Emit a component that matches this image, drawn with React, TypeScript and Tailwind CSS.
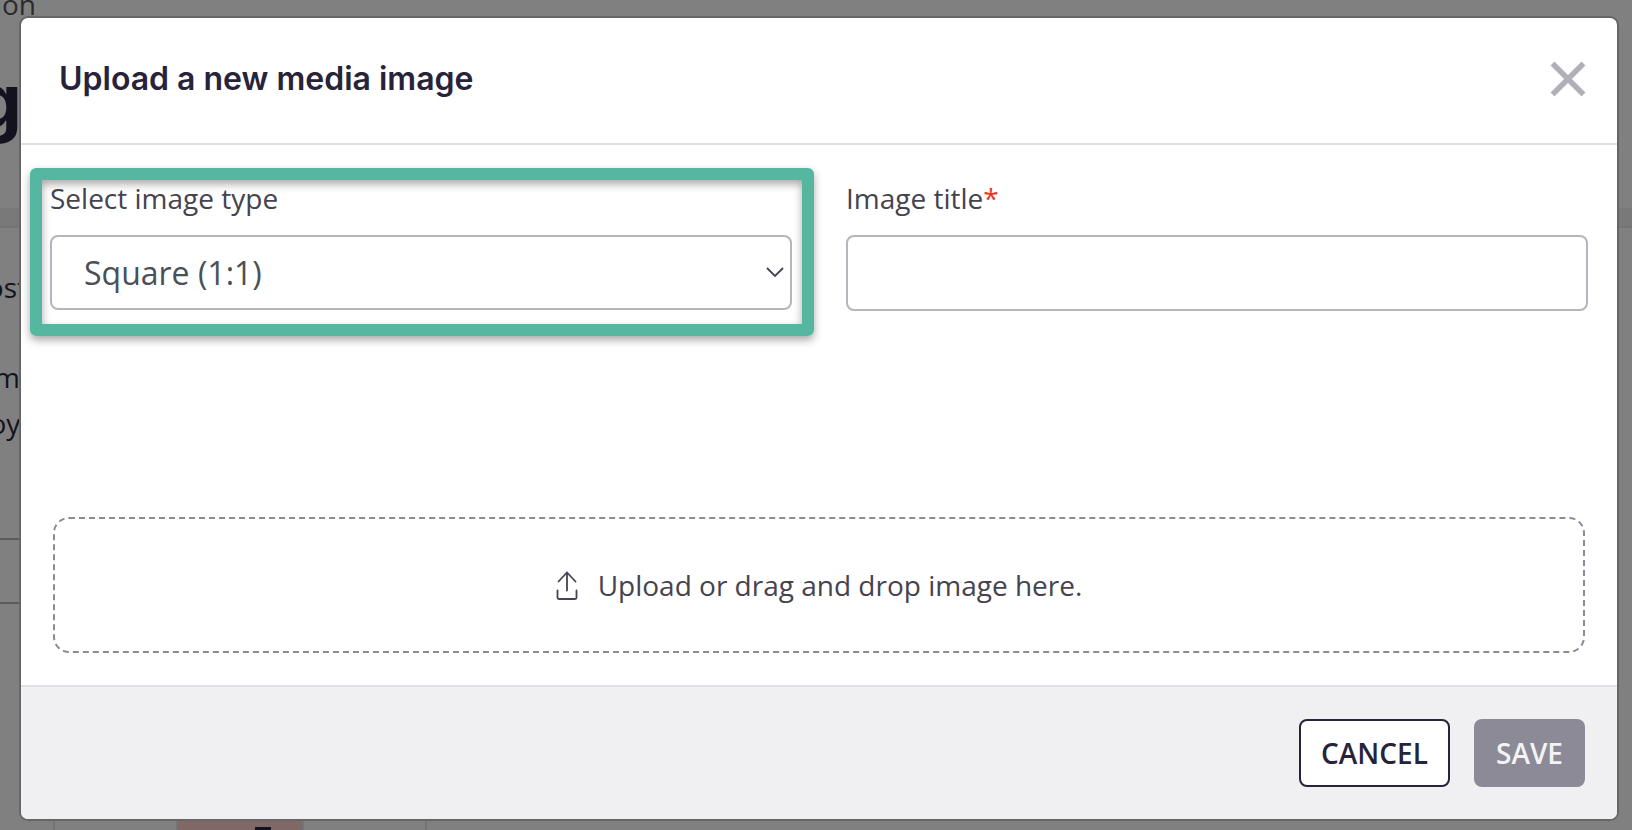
import { useState } from 'react';

const IMAGE_TYPES = ['Square (1:1)', 'Landscape (16:9)', 'Portrait (3:4)'];

const PageBackdrop = () => (
  <div
    aria-hidden="true"
    className="absolute inset-0 overflow-hidden bg-[#808080] text-[28px] text-[#15121f] flex flex-col"
  >
    <div className="h-[208px] shrink-0">
      <div className="h-6 w-9 flex justify-end items-end text-[#2b2b30] leading-10">
        <span>ion</span>
      </div>
      <div className="mt-6 w-[22px] flex justify-end text-[76px] leading-[104px] font-bold font-['Inter',sans-serif]">
        <span>g</span>
      </div>
    </div>
    <div className="h-5 shrink-0 bg-[#797979] border-b-2 border-[#757575]"></div>
    <div className="h-[310px] shrink-0 pt-9">
      <div className="w-[27px] flex justify-end leading-[46px]">
        <span>ost</span>
      </div>
      <div className="mt-11 w-5 flex justify-end leading-[46px]">
        <span>m</span>
      </div>
      <div className="w-9 flex justify-end leading-[46px]">
        <span>oye</span>
      </div>
    </div>
    <div className="h-[66px] w-1/2 shrink-0 border-y-2 border-[#5c5c5c]"></div>
    <div className="flex-1 flex pl-[53px]">
      <div className="w-[123px] border-l-2 border-[#747474]"></div>
      <div className="w-[128px] border-x-2 border-[#747476] bg-[#806866] flex flex-col justify-end items-end pr-[31px]">
        <div className="h-[3px] w-4 bg-[#15121f]"></div>
      </div>
      <div className="w-[123px] border-r-2 border-[#747474]"></div>
    </div>
  </div>
);

const CloseIcon = () => (
  <svg width="36" height="36" viewBox="0 0 36 36" fill="none">
    <path d="M2.5 2.5 33.5 33.5M33.5 2.5 2.5 33.5" stroke="#b1b0b8" strokeWidth="5.5" />
  </svg>
);

const UploadIcon = () => (
  <svg
    width="22"
    height="30"
    viewBox="0 0 22 30"
    fill="none"
    stroke="#45434f"
    strokeWidth="1.8"
    strokeLinecap="round"
    strokeLinejoin="round"
  >
    <path d="M11 20.5V2.5M2.5 11.5 11 2.5 19.5 11.5" />
    <path d="M1.5 20.5V27.5a1.5 1.5 0 0 0 1.5 1.5h16a1.5 1.5 0 0 0 1.5-1.5v-7" />
  </svg>
);

const App = () => {
  const [imageType, setImageType] = useState<string>(IMAGE_TYPES[0]);
  const [title, setTitle] = useState<string>('');

  return (
    <div className="relative h-screen overflow-hidden font-['Open_Sans',sans-serif]">
      <PageBackdrop />

      <div className="relative h-full flex pt-4 pl-[19px] pr-[13px] pb-[9px]">
        <div
          role="dialog"
          aria-labelledby="dialog-title"
          className="flex-1 flex flex-col overflow-hidden rounded-[9px] border-2 border-[#666666] bg-white"
        >
          <header className="flex items-center justify-between h-[127px] shrink-0 pl-[38px] pr-[31px] pb-1 border-b-2 border-[#dee2e6]">
            <h2
              id="dialog-title"
              className="font-['Inter',sans-serif] text-[32px] leading-10 font-semibold text-[#26233a]"
            >
              Upload a new media image
            </h2>
            <button type="button" aria-label="Close">
              <CloseIcon />
            </button>
          </header>

          <main className="flex-1 flex flex-col justify-between pt-[33px] pb-8 px-[29px]">
            <div className="grid grid-cols-2 items-start gap-[54px] text-[28px] text-[#45434f]">
              <div className="relative flex flex-col">
                <label htmlFor="image-type" className="leading-10 mb-[17px]">
                  Select image type
                </label>
                <div className="relative">
                  <select
                    id="image-type"
                    value={imageType}
                    onChange={e => setImageType(e.target.value)}
                    className="block w-full h-[75px] appearance-none rounded-lg border-2 border-[#b6b4bd] bg-white pl-8 pr-10 text-[32px] text-[#495057]"
                  >
                    {IMAGE_TYPES.map(type => (
                      <option key={type} value={type}>
                        {type}
                      </option>
                    ))}
                  </select>
                  <svg
                    className="absolute right-2 top-8 pointer-events-none"
                    width="18"
                    height="11"
                    viewBox="0 0 18 11"
                    fill="none"
                  >
                    <path d="M1 1 9 9 17 1" stroke="#45434f" strokeWidth="1.8" />
                  </svg>
                </div>
                <div className="absolute -top-[10px] -bottom-[26px] -left-5 -right-[22px] rounded-md border-12 border-[#55b7a0] pointer-events-none shadow-[0_4px_9px_rgba(0,0,0,0.35),inset_0_4px_9px_rgba(0,0,0,0.35)]"></div>
              </div>

              <div className="flex flex-col">
                <label htmlFor="image-title" className="leading-10 mb-[17px]">
                  Image title<span className="text-[#ee3524]">*</span>
                </label>
                <input
                  id="image-title"
                  type="text"
                  required
                  value={title}
                  onChange={e => setTitle(e.target.value)}
                  className="h-[76px] w-full rounded-lg border-2 border-[#b6b4bd] bg-white px-8 text-[32px] text-[#495057]"
                />
              </div>
            </div>

            <button
              type="button"
              className="mx-[3px] h-[136px] flex items-center justify-center gap-5 rounded-2xl border-2 border-dashed border-[#8c8a96] text-[28px] text-[#45434f]"
            >
              <UploadIcon />
              <span>Upload or drag and drop image here.</span>
            </button>
          </main>

          <footer className="flex justify-end gap-6 shrink-0 border-t-2 border-[#dee2e6] bg-[#f0f0f3] p-8 text-[28px] font-semibold">
            <button
              type="button"
              className="h-[68px] w-[151px] rounded-lg border-2 border-[#26233a] bg-white text-[#26233a]"
            >
              CANCEL
            </button>
            <button type="button" className="h-[68px] w-[111px] rounded-lg bg-[#8c8a96] text-[#f3f3f5]">
              SAVE
            </button>
          </footer>
        </div>
      </div>
    </div>
  );
};

export default App;
